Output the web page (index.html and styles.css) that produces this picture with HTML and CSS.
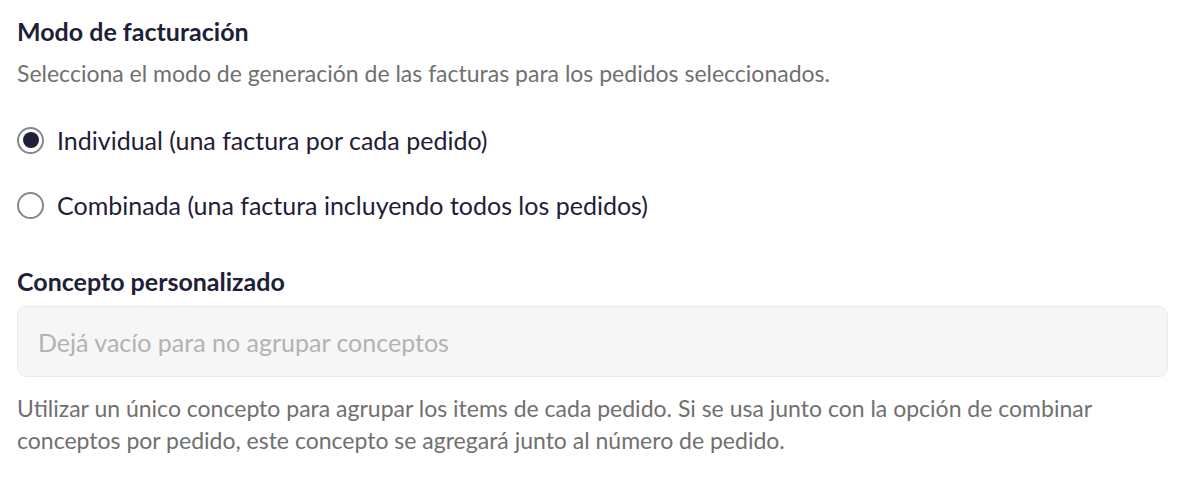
FILE: index.html
```html
<!DOCTYPE html>
<html lang="es">
<head>
<meta charset="utf-8">
<link rel="stylesheet" href="styles.css">
</head>
<body>
<div class="panel">
  <section class="group">
    <h2 class="title">Modo de facturación</h2>
    <p class="desc">Selecciona el modo de generación de las facturas para los pedidos seleccionados.</p>
    <div class="options">
      <label class="option">
        <span class="radio checked"><span class="dot"></span></span>
        <span class="option-text">Individual (una factura por cada pedido)</span>
      </label>
      <label class="option">
        <span class="radio"></span>
        <span class="option-text">Combinada (una factura incluyendo todos los pedidos)</span>
      </label>
    </div>
  </section>
  <section class="group concept">
    <h2 class="title">Concepto personalizado</h2>
    <div class="input">Dejá vacío para no agrupar conceptos</div>
    <p class="help">Utilizar un único concepto para agrupar los items de cada pedido. Si se usa junto con la opción de combinar conceptos por pedido, este concepto se agregará junto al número de pedido.</p>
  </section>
</div>
</body>
</html>
```
FILE: styles.css
```css
html, body {
  margin: 0;
  padding: 0;
  background: #ffffff;
}
body {
  font-family: Lato, "Noto Sans", sans-serif;
  color: #1f2038;
}
.panel {
  padding: 16px 14px 0 17px;
  display: flex;
  flex-direction: column;
}
.title {
  margin: 0;
  font-size: 25px;
  font-weight: 700;
  line-height: 30px;
  color: #1e2037;
}
.desc {
  margin: 13px 0 0;
  font-size: 23px;
  line-height: 28px;
  color: #707070;
}
.options {
  display: flex;
  flex-direction: column;
  gap: 35px;
  margin-top: 38px;
}
.option {
  display: flex;
  align-items: center;
  gap: 13px;
  height: 30px;
}
.radio {
  width: 23px;
  height: 23px;
  border: 2.5px solid #878787;
  border-radius: 50%;
  display: flex;
  align-items: center;
  justify-content: center;
  box-sizing: content-box;
  flex: none;
}
.dot {
  width: 16px;
  height: 16px;
  border-radius: 50%;
  background: #1f2138;
}
.option-text {
  font-size: 25px;
  color: #1f2038;
}
.concept {
  margin-top: 46px;
}
.input {
  margin-top: 10px;
  height: 71px;
  box-sizing: border-box;
  border: 1px solid #ebebeb;
  border-radius: 9px;
  background: #f6f6f6;
  display: flex;
  align-items: center;
  padding-left: 20px;
  font-size: 25px;
  color: #b3b3b3;
}
.help {
  margin: 15px 0 0;
  font-size: 23px;
  line-height: 32px;
  color: #707070;
}
```
